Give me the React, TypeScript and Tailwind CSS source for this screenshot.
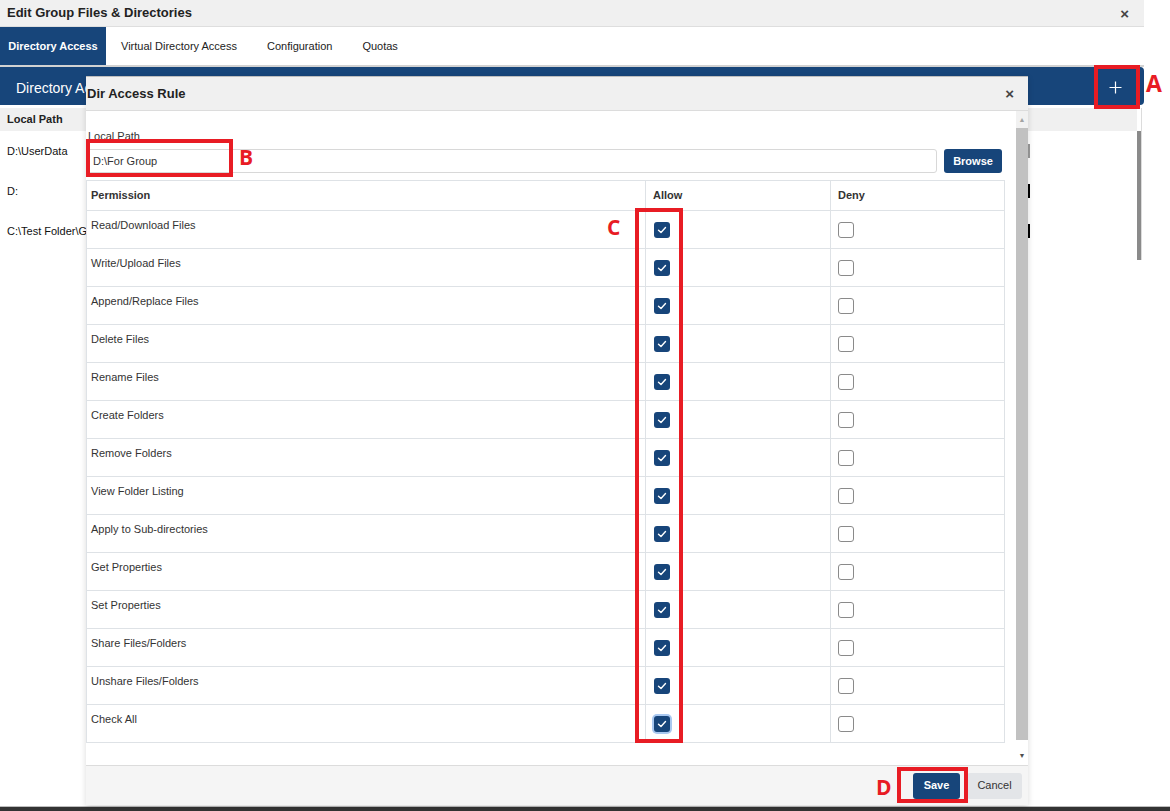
import { FC } from "react";

const perms = [
  "Read/Download Files",
  "Write/Upload Files",
  "Append/Replace Files",
  "Delete Files",
  "Rename Files",
  "Create Folders",
  "Remove Folders",
  "View Folder Listing",
  "Apply to Sub-directories",
  "Get Properties",
  "Set Properties",
  "Share Files/Folders",
  "Unshare Files/Folders",
  "Check All",
];

const bgRows = [
  { path: "D:\\UserData", mark: "border-[#9a9a9a]" },
  { path: "D:", mark: "border-black" },
  { path: "C:\\Test Folder\\Group", mark: "border-black" },
];

const Check: FC<{ checked?: boolean; focus?: boolean }> = ({ checked, focus }) =>
  checked ? (
    <span
      className={
        "flex h-[16px] w-[16px] items-center justify-center rounded-[3px] bg-[#17457a] " +
        (focus ? "ring-2 ring-[#a9c8f0]" : "")
      }
    >
      <svg width="10" height="10" viewBox="0 0 10 10" fill="none">
        <polyline points="1.5,5.2 4,7.5 8.5,2.5" stroke="white" strokeWidth="1.4" strokeLinecap="round" strokeLinejoin="round" />
      </svg>
    </span>
  ) : (
    <span className="block h-[16px] w-[16px] rounded-[3px] border border-[#8a8a8a] bg-white" />
  );

const Mark: FC<{ className: string }> = ({ className }) => (
  <div className={"absolute border-[4px] border-[#e81c24] " + className} />
);

const App: FC = () => {
  return (
    <div className="relative flex h-[811px] w-[1170px] flex-col overflow-hidden bg-white font-['Liberation_Sans',Arial,sans-serif] text-[11px] text-[#333]">
      <div className="flex w-[1144px] flex-1 flex-col">
        {/* outer dialog header */}
        <div className="flex h-[27px] items-center justify-between border-b border-[#dedede] bg-[#f0f0f0] pl-[7px] pr-[15px]">
          <span className="text-[13px] font-bold text-[#222]">Edit Group Files &amp; Directories</span>
          <span className="text-[15px] font-bold leading-none text-[#444]">×</span>
        </div>

        {/* tabs */}
        <div className="flex h-[38px] items-stretch bg-white">
          <div className="flex w-[106px] items-center justify-center bg-[#17457a] font-bold text-white">Directory Access</div>
          <div className="flex items-center px-[15px] text-[#222]">Virtual Directory Access</div>
          <div className="flex items-center px-[15px] text-[#222]">Configuration</div>
          <div className="flex items-center px-[15px] text-[#222]">Quotas</div>
        </div>
        <div className="h-[2px] bg-[#d2d2d2]" />

        {/* section bar */}
        <div className="flex h-[38px] items-center justify-between rounded-r-[4px] bg-[#17457a] pl-[16px] pr-[14px]">
          <span className="whitespace-nowrap pt-[4px] text-[14px] text-white">Directory Access</span>
          <span className="flex h-[32px] w-[30px] items-center justify-center pt-[3px]">
            <svg width="13" height="13" viewBox="0 0 13 13">
              <path d="M6.5 0.5v12M0.5 6.5h12" stroke="white" strokeWidth="1.2" />
            </svg>
          </span>
        </div>

        {/* background list */}
        <div className="mt-[3px] flex h-[152px] w-[1142px] border-r border-[#dcdcdc]">
          <div className="flex flex-1 flex-col">
            <div className="flex h-[23px] items-center bg-[#f0f0f0] pl-[7px] font-bold text-[#222]">Local Path</div>
            {bgRows.map((r) => (
              <div key={r.path} className="flex h-[40px] items-center text-[#111]">
                <span className="w-[1015px] whitespace-nowrap pl-[7px]">{r.path}</span>
                <span className={"block h-[14px] w-[15px] border-2 " + r.mark} />
              </div>
            ))}
          </div>
          <div className="mt-[23px] h-[129px] w-[4px] bg-[#8a8a8a]" />
        </div>
      </div>

      <div className="h-[1px] bg-[#bdbdbd]" />
      <div className="h-[4px] bg-[#333]" />

      {/* Dir Access Rule modal */}
      <div className="absolute left-[86px] top-[76px] flex h-[729px] w-[942px] flex-col bg-white shadow-[0_2px_6px_rgba(0,0,0,0.15)]">
        <div className="flex h-[35px] shrink-0 items-center justify-between border-t border-b border-t-[#bdbdbd] border-b-[#dcdcdc] bg-[#f0f0f0] pl-[1px] pr-[14px]">
          <span className="pt-[1px] text-[13px] font-bold text-[#222]">Dir Access Rule</span>
          <span className="text-[15px] font-bold leading-none text-[#444]">×</span>
        </div>

        <div className="flex min-h-0 flex-1">
          <div className="flex flex-1 flex-col">
            <div className="pl-[2px] pt-[19px] leading-[13px] text-[#333]">Local Path</div>
            <div className="mt-[6px] flex gap-[7px]">
              <div className="flex h-[24px] w-[851px] items-center rounded-[3px] border border-[#d8d8d8] pl-[6px] text-[#333]">
                D:\For Group
              </div>
              <button className="h-[24px] w-[58px] rounded-[3px] bg-[#17457a] font-bold text-white">Browse</button>
            </div>

            <div className="mt-[7px] w-[919px] border border-[#dee2e6]">
              <div className="grid h-[29px] grid-cols-[558px_185px_1fr] font-bold text-[#333]">
                <div className="flex items-center pl-[4px]">Permission</div>
                <div className="flex items-center border-l border-[#dee2e6] pl-[7px]">Allow</div>
                <div className="flex items-center border-l border-[#dee2e6] pl-[7px]">Deny</div>
              </div>
              {perms.map((p, i) => (
                <div key={p} className="grid h-[38px] grid-cols-[558px_185px_1fr] border-t border-[#dee2e6]">
                  <div className="pl-[4px] pt-[8px] leading-[13px] text-[#333]">{p}</div>
                  <div className="flex items-center border-l border-[#dee2e6] pl-[8px]">
                    <Check checked focus={i === perms.length - 1} />
                  </div>
                  <div className="flex items-center border-l border-[#dee2e6] pl-[7px]">
                    <Check />
                  </div>
                </div>
              ))}
            </div>
          </div>

          {/* scrollbar */}
          <div className="flex w-[12px] flex-col bg-[#f1f1f1]">
            <div className="flex h-[17px] items-center justify-center text-[7px] leading-none text-[#a3a3a3]">▲</div>
            <div className="flex-1 bg-[#c1c1c1]" />
            <div className="flex h-[25px] items-end justify-center bg-white pb-[6px] text-[7px] leading-none text-[#505050]">▼</div>
          </div>
        </div>

        <div className="flex h-[40px] shrink-0 items-center justify-end gap-[7px] border-t border-[#dcdcdc] bg-[#f5f5f5] pr-[6px]">
          <button className="h-[26px] w-[47px] rounded-[3px] bg-[#17457a] font-bold text-white">Save</button>
          <button className="h-[26px] w-[55px] rounded-[3px] bg-[#e3e5e8] text-[#333]">Cancel</button>
        </div>
      </div>

      {/* red annotations */}
      <Mark className="left-[1094px] top-[65px] h-[44px] w-[46px]" />
      <Mark className="left-[86px] top-[139px] h-[38px] w-[147px]" />
      <Mark className="left-[635px] top-[208px] h-[535px] w-[48px]" />
      <Mark className="left-[897px] top-[767px] h-[36px] w-[71px]" />
      <span className="absolute left-[1146px] top-[72px] font-['Open_Sans',sans-serif] text-[23px] font-bold leading-none text-[#e81c24]">A</span>
      <span className="absolute left-[239px] top-[147px] font-['Open_Sans',sans-serif] text-[21px] font-bold leading-none text-[#e81c24]">B</span>
      <span className="absolute left-[607px] top-[217px] font-['Open_Sans',sans-serif] text-[21px] font-bold leading-none text-[#e81c24]">C</span>
      <span className="absolute left-[876px] top-[777px] font-['Open_Sans',sans-serif] text-[21px] font-bold leading-none text-[#e81c24]">D</span>
    </div>
  );
};

export default App;
